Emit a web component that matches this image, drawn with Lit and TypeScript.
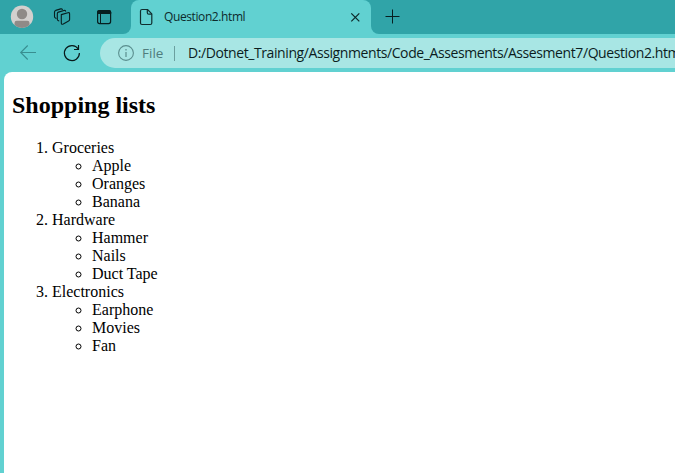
import { LitElement, html, css } from "lit";
import { customElement } from "lit/decorators.js";

const GROUPS = [
  { name: "Groceries", items: ["Apple", "Oranges", "Banana"] },
  { name: "Hardware", items: ["Hammer", "Nails", "Duct Tape"] },
  { name: "Electronics", items: ["Earphone", "Movies", "Fan"] },
];

@customElement("tab-strip")
class TabStrip extends LitElement {
  static styles = css`
    :host { display: flex; height: 34px; background: #30a4a8; font-family: "Open Sans", "Noto Sans", sans-serif; }
    svg { display: block; flex: none; }
    .tools { width: 131px; flex: none; display: flex; box-sizing: border-box; background: #30a4a8; border-bottom-right-radius: 8px; }
    .tab { width: 240px; flex: none; display: flex; background: #61d1d1; border-radius: 8px 8px 0 0; }
    .title { width: 183px; font-size: 12px; line-height: 34px; letter-spacing: -0.4px; color: #0d2b2c; white-space: nowrap; }
    .under { display: flex; width: 100%; background: linear-gradient(#30a4a8 50%, #61d1d1 50%); }
    .rest { flex: 1; background: #30a4a8; border-bottom-left-radius: 8px; }
  `;
  render() {
    return html`<div class="under">
      <div class="tools">
        <svg width="131" height="34" viewBox="0 0 131 34" fill="none" stroke="#071f20">
          <defs><clipPath id="face"><circle cx="22" cy="16.7" r="11.2" /></clipPath></defs>
          <circle cx="22" cy="16.7" r="11.2" fill="#d3d0ce" stroke="none" />
          <g clip-path="url(#face)" fill="#8f8a87" stroke="none">
            <circle cx="22" cy="14" r="5.2" />
            <path d="M14.5 28v-5q0-2.2 2.2-2.2h10.6q2.2 0 2.2 2.2v5z" />
          </g>
          <g stroke-width="1.1" stroke-linejoin="round" stroke-linecap="round">
            <path d="M61.3 14.6l6.6-1.9q1.7-.4 1.7 1.2v5.6q0 1.1-1 1.5l-5.3 2.9q-2 1-2-1z" />
            <path d="M58.8 20.9l-1-.7q-.5-.4-.5-1.2v-5.2q0-1.2 1.2-1.7l5.4-1.6q1.4-.3 1.7.7" />
            <path d="M56 18.4l-1-.8q-.5-.4-.5-1.2v-4.3q0-1.2 1.2-1.7l5-1.5q1.3-.3 1.7.7" />
          </g>
          <rect x="97.6" y="10.6" width="13" height="13" rx="2" stroke-width="1.2" />
          <path d="M97 14v-1.8q0-2.2 2.2-2.2h9.8q2.2 0 2.2 2.2v1.8z" fill="#071f20" stroke="none" />
          <path d="M100.5 14v9.5" stroke-width="1" />
        </svg>
      </div>
      <div class="tab">
        <svg width="33" height="34" viewBox="0 0 33 34" fill="none" stroke="#102d2e" stroke-width="1.2" stroke-linejoin="round">
          <path d="M11 9.5h5.5l4.3 4.3v9.2q0 1.5-1.5 1.5h-8.3q-1.5 0-1.5-1.5v-12q0-1.5 1.5-1.5z" />
          <path d="M16.3 9.7v3q0 1.5 1.5 1.5h3" />
        </svg>
        <span class="title">Question2.html</span>
        <svg width="24" height="34" viewBox="0 0 24 34" fill="none" stroke="#0c2829" stroke-width="1.2">
          <path d="M4.3 13.3l8 8m0-8l-8 8" />
        </svg>
      </div>
      <div class="rest">
        <svg width="40" height="34" viewBox="0 0 40 34" fill="none" stroke="#071f20" stroke-width="1">
          <path d="M14.5 16.5h14m-7-7v14" />
        </svg>
      </div>
    </div>`;
  }
}

@customElement("address-row")
class AddressRow extends LitElement {
  static styles = css`
    :host { display: flex; height: 38px; box-sizing: border-box; padding: 4px 0; background: #61d1d1; font-family: "Open Sans", "Noto Sans", sans-serif; font-size: 14px; line-height: 30px; white-space: nowrap; overflow: hidden; }
    svg { display: block; flex: none; }
    .field { flex: 1; min-width: 0; display: flex; background: #a8e6e4; border-radius: 15px 0 0 15px; overflow: hidden; }
    .kind { width: 32px; flex: none; font-size: 13.5px; color: #507d7d; }
    .bar { width: 1px; height: 15px; margin: 8px 13px 0 0; flex: none; background: #6b9f9f; }
    .url { color: #0c1d1e; letter-spacing: -0.41px; }
  `;
  render() {
    return html`
      <svg width="100" height="30" viewBox="0 38 100 30" fill="none">
        <path d="M36 52.5h-15.3m7-7l-7 7 7 7" stroke="#388e90" stroke-width="1.1" />
        <path d="M78.2 49a7.5 7.5 0 1 0 1.2 4M78.5 45v4.5h-4.5" stroke="#08191a" stroke-width="1.2" />
      </svg>
      <div class="field">
        <svg width="42" height="30" viewBox="0 0 42 30" fill="none" stroke="#5a8e8e" stroke-width="1.1">
          <circle cx="26" cy="15" r="7.4" />
          <path d="M26 14v5M26 11v1.4" stroke-width="1.2" />
        </svg>
        <span class="kind">File</span>
        <span class="bar"></span>
        <span class="url">D:/Dotnet_Training/Assignments/Code_Assesments/Assesment7/Question2.html</span>
      </div>`;
  }
}

@customElement("app-root")
class AppRoot extends LitElement {
  static styles = css`
    :host { display: flex; flex-direction: column; height: 473px; overflow: hidden; background: #61d1d1; }
    .frame { flex: 1; min-height: 0; padding-left: 4px; }
    .page { height: 100%; box-sizing: border-box; background: #fff; border-top-left-radius: 8px; padding: 20px 8px 0; color: #000; font: 16px/18px "Liberation Serif", "Times New Roman", serif; }
    h2 { margin: 0 0 20px; font-size: 24px; line-height: 27px; }
    ol, ul { margin: 0; padding-left: 40px; }
    ul { list-style-type: circle; }
  `;
  render() {
    return html`
      <tab-strip></tab-strip>
      <address-row></address-row>
      <div class="frame">
        <main class="page">
          <h2>Shopping lists</h2>
          <ol>
            ${GROUPS.map((g) => html`<li>${g.name}<ul>${g.items.map((i) => html`<li>${i}</li>`)}</ul></li>`)}
          </ol>
        </main>
      </div>`;
  }
}
